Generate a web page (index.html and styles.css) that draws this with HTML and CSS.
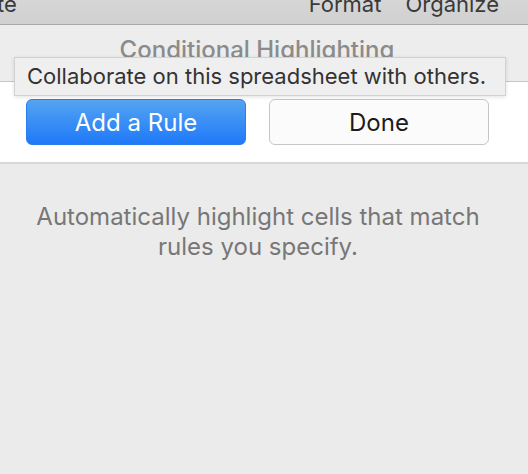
FILE: index.html
```html
<!DOCTYPE html>
<html>
<head>
<meta charset="utf-8">
<link rel="stylesheet" href="styles.css">
</head>
<body>
<div class="window">
  <div class="toolbar">
    <span class="tb-item tb-cut">te</span>
    <span class="tb-spacer"></span>
    <span class="tb-item">Format</span>
    <span class="tb-item">Organize</span>
  </div>
  <div class="header">
    <div class="title">Conditional Highlighting</div>
  </div>
  <div class="actions">
    <button class="btn btn-primary">Add a Rule</button>
    <button class="btn btn-secondary">Done</button>
  </div>
  <div class="content">
    <p class="hint">Automatically highlight cells that match<br>rules you specify.</p>
  </div>
  <div class="tooltip">Collaborate on this spreadsheet with others.</div>
</div>
</body>
</html>
```
FILE: styles.css
```css
html, body {
  margin: 0;
  padding: 0;
  height: 100%;
}
body {
  font-family: Inter, "Noto Sans", "Liberation Sans", sans-serif;
  background: #ebebeb;
  overflow: hidden;
}
.window {
  position: relative;
  width: 528px;
  height: 474px;
  display: flex;
  flex-direction: column;
}
.toolbar {
  height: 24px;
  background: linear-gradient(#d6d6d6, #d0d0d0);
  border-bottom: 1px solid #a9a9a9;
  display: flex;
  align-items: flex-end;
  padding-right: 29px;
  gap: 24px;
  overflow: hidden;
  flex-shrink: 0;
}
.tb-item {
  font-size: 22px;
  line-height: 22px;
  color: #3a3a3a;
  margin-bottom: 9px;
}
.tb-cut {
  margin-left: -3px;
}
.tb-spacer {
  flex: 1;
}
.header {
  height: 56px;
  background: #ededed;
  border-bottom: 1px solid #c6c6c6;
  display: flex;
  justify-content: center;
  flex-shrink: 0;
}
.title {
  font-size: 24px;
  font-weight: 500;
  color: #8b8b8b;
  margin-top: 10px;
  line-height: 30px;
  padding-right: 14px;
}
.actions {
  background: #ffffff;
  height: 82px;
  border-bottom: 2px solid #d7d7d7;
  box-sizing: border-box;
  display: flex;
  padding: 17px 38px 0 26px;
  gap: 23px;
  flex-shrink: 0;
}
.btn {
  width: 220px;
  height: 46px;
  border-radius: 6px;
  font-family: inherit;
  font-size: 24px;
  padding: 0;
  box-sizing: border-box;
}
.btn-primary {
  background: linear-gradient(#55a4f1, #1f79f9);
  border: 1px solid #2a7ff0;
  color: #ffffff;
}
.btn-secondary {
  background: #fbfbfb;
  border: 1px solid #c6c6c6;
  color: #1c1c1c;
}
.content {
  flex: 1;
  background: #ebebeb;
}
.hint {
  margin: 38px 0 0 0;
  text-align: center;
  font-size: 24px;
  line-height: 30px;
  color: #777777;
  padding-right: 12px;
}
.tooltip {
  position: absolute;
  left: 14px;
  top: 57px;
  width: 492px;
  height: 39px;
  box-sizing: border-box;
  background: #efefef;
  border: 1px solid #d2d2d2;
  box-shadow: 0 1px 4px rgba(0,0,0,0.12);
  font-size: 22px;
  line-height: 37px;
  color: #333333;
  padding-left: 12px;
}
```
